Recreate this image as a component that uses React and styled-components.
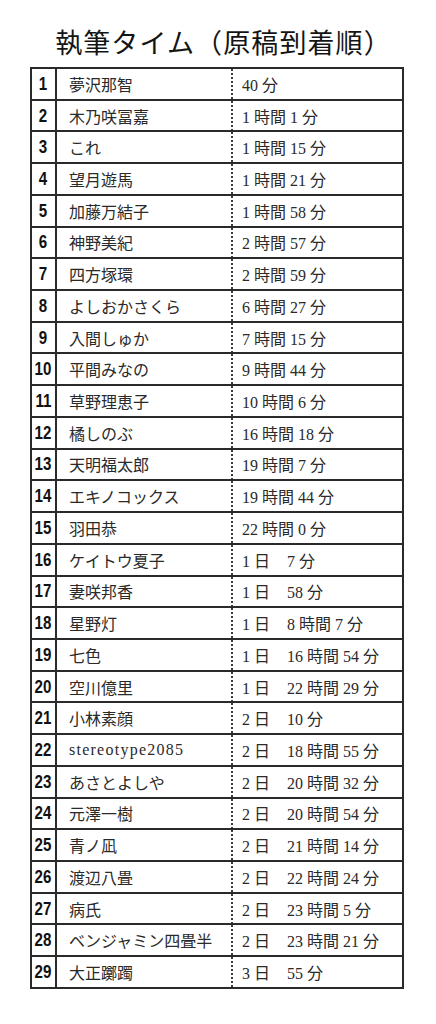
import React from "react";
import styled, { createGlobalStyle } from "styled-components";

const GlobalStyle = createGlobalStyle`
  html, body { margin: 0; padding: 0; background: #ffffff; }
  body { width: 436px; }
`;

const Page = styled.div`
  width: 436px;
  min-height: 1024px;
  background: #ffffff;
  box-sizing: border-box;
  padding-bottom: 35px;
`;

const Title = styled.h1`
  margin: 0;
  padding: 28px 0 12px 11px;
  font-family: "Noto Sans CJK JP", "Noto Sans", sans-serif;
  font-weight: 400;
  font-size: 27px;
  line-height: 27px;
  color: #141414;
  text-align: center;
  letter-spacing: 1.1px;
`;

const Table = styled.div`
  width: 374px;
  margin-left: 30px;
  box-sizing: border-box;
  border: 2px solid #2a2a2a;
  border-bottom: none;
  display: flex;
  flex-direction: column;
`;

const Row = styled.div`
  display: grid;
  grid-template-columns: 25px 174px 1fr;
  height: 31.724px;
  box-sizing: border-box;
  border-bottom: 2px solid #2a2a2a;
`;

const NumCell = styled.div`
  display: flex;
  align-items: center;
  justify-content: center;
  box-sizing: border-box;
  border-right: 2px solid #2a2a2a;
  font-family: "Liberation Sans Narrow", "Liberation Sans", Arial, sans-serif;
  font-weight: 700;
  font-size: 18px;
  color: #111;
  padding-top: 1px;
`;

const NumText = styled.span`
  display: inline-block;
  transform: scaleX(0.84);
`;

const NameCell = styled.div`
  display: flex;
  align-items: center;
  padding-left: 12px;
  font-family: "Liberation Serif", "Noto Sans CJK JP", serif;
  font-size: 16px;
  font-weight: 400;
  color: #2a2a2a;
  white-space: nowrap;
  letter-spacing: ${(p) => (p.$latin ? "1.25px" : "0")};
`;

const TimeCell = styled.div`
  display: flex;
  align-items: center;
  padding-left: 11px;
  font-family: "Liberation Serif", "Noto Sans CJK JP", serif;
  font-size: 16px;
  font-weight: 400;
  color: #2a2a2a;
  white-space: nowrap;
  background-image: linear-gradient(to bottom, #3a3a3a 55%, transparent 55%);
  background-size: 1.5px 4px;
  background-repeat: repeat-y;
  background-position: left top;
`;

const DayPart = styled.span`
  display: inline-block;
  width: 45px;
`;

// [name, days, hours, minutes, showHours]
const rows = [
  ["夢沢那智", 0, 0, 40, false],
  ["木乃咲冨嘉", 0, 1, 1, true],
  ["これ", 0, 1, 15, true],
  ["望月遊馬", 0, 1, 21, true],
  ["加藤万結子", 0, 1, 58, true],
  ["神野美紀", 0, 2, 57, true],
  ["四方塚環", 0, 2, 59, true],
  ["よしおかさくら", 0, 6, 27, true],
  ["入間しゅか", 0, 7, 15, true],
  ["平間みなの", 0, 9, 44, true],
  ["草野理恵子", 0, 10, 6, true],
  ["橘しのぶ", 0, 16, 18, true],
  ["天明福太郎", 0, 19, 7, true],
  ["エキノコックス", 0, 19, 44, true],
  ["羽田恭", 0, 22, 0, true],
  ["ケイトウ夏子", 1, 0, 7, false],
  ["妻咲邦香", 1, 0, 58, false],
  ["星野灯", 1, 8, 7, true],
  ["七色", 1, 16, 54, true],
  ["空川億里", 1, 22, 29, true],
  ["小林素顔", 2, 0, 10, false],
  ["stereotype2085", 2, 18, 55, true],
  ["あさとよしや", 2, 20, 32, true],
  ["元澤一樹", 2, 20, 54, true],
  ["青ノ凪", 2, 21, 14, true],
  ["渡辺八畳", 2, 22, 24, true],
  ["病氏", 2, 23, 5, true],
  ["ベンジャミン四畳半", 2, 23, 21, true],
  ["大正躑躅", 3, 0, 55, false],
];

function TimeText({ d, h, m, showHours }) {
  return (
    <>
      {d > 0 && <DayPart>{d} 日</DayPart>}
      <span>{showHours ? `${h} 時間 ${m} 分` : `${m} 分`}</span>
    </>
  );
}

export default function App() {
  return (
    <Page>
      <GlobalStyle />
      <Title>執筆タイム（原稿到着順）</Title>
      <Table>
        {rows.map(([name, d, h, m, showHours], i) => (
          <Row key={i}>
            <NumCell>
              <NumText>{i + 1}</NumText>
            </NumCell>
            <NameCell $latin={/^[a-z0-9]+$/i.test(name)}>{name}</NameCell>
            <TimeCell>
              <TimeText d={d} h={h} m={m} showHours={showHours} />
            </TimeCell>
          </Row>
        ))}
      </Table>
    </Page>
  );
}
